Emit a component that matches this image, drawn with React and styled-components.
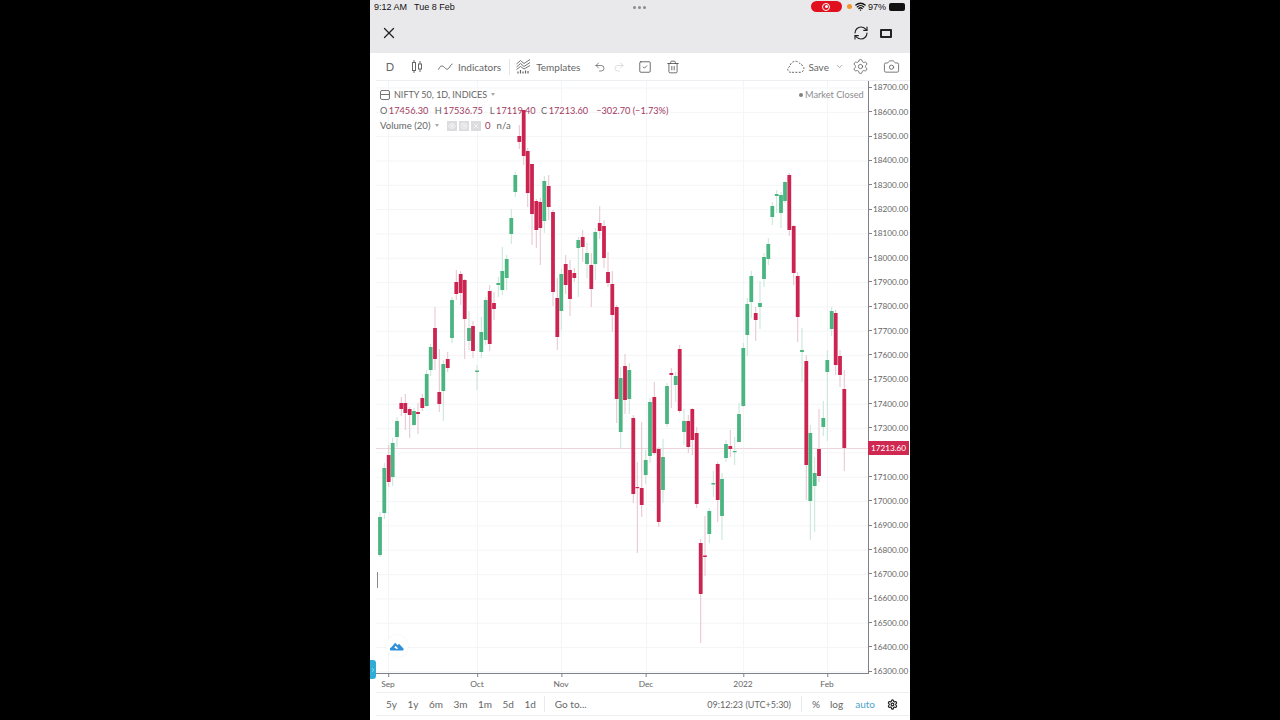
import React from 'react';
import styled, { createGlobalStyle } from 'styled-components';
import { X, RefreshCw, Undo2, Redo2, SquareCheck, Trash2, ChevronDown, Settings, Camera, Wifi, ChevronRight, Eye } from 'lucide-react';

const GlobalStyle = createGlobalStyle`
  html, body {
    margin: 0;
    height: 100%;
    background: #000;
  }
  * { box-sizing: border-box; }
`;

const FONT = 'Lato, "Open Sans", sans-serif';
const UP = '#4bb582';
const DOWN = '#cb2450';
const UP_WICK = '#c5e6d5';
const DOWN_WICK = '#e6c3ce';
const GRID = '#f4f5f7';

// x, colour, wick top, body top, body bottom, wick bottom (read off the picture)
const candles = [
  [380, 'g', 512, 517, 555, 557], [384.3, 'g', 463, 468, 513, 519], [388.7, 'r', 445, 455, 482, 487],
  [392.7, 'g', 438, 443, 477, 486], [397, 'g', 417, 421, 437, 447], [401.3, 'r', 397, 403, 409, 416],
  [405.3, 'r', 394, 403, 413, 430], [409.7, 'r', 407, 409, 415, 438], [414, 'g', 408, 411, 425, 426],
  [418, 'r', 403, 412, 414, 434], [422.3, 'r', 394, 398, 408, 411], [426.7, 'g', 370, 374, 406, 407],
  [430.7, 'g', 344, 347, 370, 376], [435, 'r', 307, 328, 359, 370], [439.3, 'r', 349, 392, 404, 412],
  [443.3, 'g', 360, 364, 391, 421], [447.7, 'r', 352, 359, 368, 372], [452, 'g', 297, 300, 338, 343],
  [456.3, 'r', 270, 282, 294, 300], [460.7, 'r', 271, 274, 293, 305], [464.7, 'r', 279, 280, 319, 359],
  [469, 'g', 311, 328, 341, 350], [473, 'r', 321, 326, 351, 358], [477, 'g', 365, 370.5, 372, 390],
  [481.3, 'g', 317, 332, 352, 358], [485.7, 'g', 297, 300, 340, 345], [489.7, 'r', 285, 291, 344, 351],
  [494, 'r', 292, 303, 309, 320], [498.3, 'g', 277, 283, 285, 297], [502.3, 'g', 247, 271, 290, 295],
  [506.7, 'g', 255, 259, 278, 290], [511.3, 'g', 209, 218, 234, 244], [515.3, 'g', 172, 175, 192, 197],
  [519.3, 'r', 125, 136, 142, 149], [523.7, 'r', 110, 110, 156, 165], [527.7, 'r', 148, 151, 193, 207],
  [532, 'r', 164, 164, 214, 245], [536.3, 'r', 199, 201, 230, 248], [540.3, 'r', 198, 202, 228, 265],
  [544.3, 'g', 176, 181, 221, 233], [548.7, 'r', 175, 186, 207, 220], [553, 'r', 210, 212, 292, 306],
  [557.3, 'r', 278, 298, 337, 350], [561.3, 'g', 269, 274, 311, 330], [565.7, 'r', 255, 264, 285, 294],
  [570, 'r', 260, 270, 299, 316], [574.3, 'r', 268, 273, 278, 282], [578.3, 'g', 237, 240, 248, 297],
  [582.7, 'r', 230, 237, 247, 262], [587, 'g', 243, 253, 264, 278], [591.3, 'r', 253, 265, 289, 307],
  [595.3, 'g', 228, 232, 264, 280], [599.7, 'r', 206, 223, 231, 239], [604, 'r', 220, 226, 258, 268],
  [608, 'r', 252, 272, 283, 287], [612.3, 'r', 271, 284, 315, 332], [616.7, 'r', 305, 307, 399, 423],
  [620.7, 'g', 367, 378, 432, 448], [625, 'r', 354, 366, 400, 414], [629.3, 'g', 363, 370, 399, 414],
  [633.3, 'r', 415, 418, 494, 503], [637.3, 'r', 462, 487, 488, 553], [641.7, 'r', 422, 488, 505, 517],
  [645.7, 'g', 450, 460, 475, 484], [650, 'g', 398, 402, 456, 463], [654.3, 'r', 382, 397, 453, 455],
  [658.7, 'r', 447, 449, 522, 527], [663, 'g', 439, 457, 490, 503], [667, 'g', 383, 386, 424, 427],
  [671.3, 'r', 368, 373, 375, 408], [675.7, 'g', 372, 376, 385, 402], [679.7, 'r', 345, 349, 411, 413],
  [684, 'g', 409, 421, 432, 445], [688.3, 'r', 415, 421, 447, 453], [692.3, 'r', 408, 409, 440, 455],
  [696.7, 'r', 427, 433, 504, 508], [700.7, 'r', 539, 543, 594, 643], [705, 'r', 516, 555.5, 557, 576],
  [709.3, 'g', 508, 511, 534, 543], [713.3, 'g', 471, 483, 484.5, 497], [717.7, 'r', 462, 464, 500, 522],
  [722, 'g', 473, 479, 516, 540], [726, 'g', 440, 444, 458, 462], [730.3, 'r', 430, 446, 449, 457],
  [734.7, 'g', 437, 451, 452, 465], [739, 'g', 403, 414, 442, 442], [743.3, 'g', 343, 348, 406, 407],
  [747.3, 'g', 298, 304, 335, 356], [751.3, 'g', 271, 276, 302, 318], [755.7, 'r', 307, 313, 320, 341],
  [760, 'g', 281, 303, 307, 329], [764, 'g', 253, 257, 279, 287], [768.3, 'g', 238, 244, 259, 265],
  [772.3, 'g', 202, 206, 217, 225], [776.7, 'g', 190, 194, 196, 213], [781, 'g', 192, 195, 213, 228],
  [785, 'g', 181, 182, 201, 203], [789.3, 'r', 173, 175, 230, 236], [793.7, 'r', 225, 226, 273, 285],
  [797.7, 'r', 272, 276, 317, 342], [802, 'g', 328, 350, 352, 382], [806.3, 'r', 355, 361, 465, 500],
  [810.3, 'g', 425, 433, 501, 540], [814.7, 'g', 457, 473, 486, 532], [819, 'r', 409, 449, 476, 482],
  [823.3, 'g', 401, 418, 427, 436], [827.3, 'g', 350, 360, 372, 441], [831.7, 'g', 307, 311, 329, 336],
  [835.7, 'r', 310, 313, 365, 375], [840, 'r', 350, 356, 375, 387], [844.3, 'r', 370, 389, 448, 471],
];

const prices = Array.from({ length: 25 }, (_, i) => 18700 - i * 100);
const timeMarks = [
  { label: 'Sep', x: 388 }, { label: 'Oct', x: 477 }, { label: 'Nov', x: 561 },
  { label: 'Dec', x: 646 }, { label: '2022', x: 743 }, { label: 'Feb', x: 827 },
];
const ranges = ['5y', '1y', '6m', '3m', '1m', '5d', '1d'];

const Page = styled.div`
  width: 100%;
  height: 100vh;
  display: flex;
  justify-content: center;
  background: #000;
  overflow: hidden;
`;
const Phone = styled.div`
  width: 540px;
  height: 720px;
  display: flex;
  flex-direction: column;
  background: #fff;
  font-family: ${FONT};
  color: #555;
`;
const TopBar = styled.div`
  height: 53px;
  flex: none;
  background: #e9e9eb;
  display: flex;
  flex-direction: column;
`;
const StatusRow = styled.div`
  height: 13px;
  padding: 0 5px 0 4px;
  display: flex;
  align-items: center;
  font-family: "Liberation Sans", sans-serif;
  font-size: 9px;
  color: #111;
  position: relative;
`;
const StatusDate = styled.span`
  margin-left: 7px;
`;
const Dots = styled.div`
  position: absolute;
  left: 263px;
  top: 6px;
  display: flex;
  gap: 2px;
`;
const Dot = styled.i`
  width: 3px;
  height: 3px;
  border-radius: 50%;
  background: #8b8b8f;
`;
const StatusRight = styled.div`
  margin-left: auto;
  display: flex;
  align-items: center;
`;
const RecordPill = styled.div`
  width: 31px;
  height: 11px;
  border-radius: 6px;
  background: #e0101f;
  display: flex;
  align-items: center;
  justify-content: center;
  margin-right: 5px;
`;
const RecordMark = styled.i`
  width: 8px;
  height: 8px;
  border-radius: 50%;
  border: 1px solid #fff;
  display: flex;
  align-items: center;
  justify-content: center;
  &::after {
    content: '';
    width: 3px;
    height: 3px;
    border-radius: 50%;
    background: #fff;
  }
`;
const OrangeDot = styled.i`
  width: 5px;
  height: 5px;
  border-radius: 50%;
  background: #f0962a;
  margin-right: 3px;
`;
const Percent = styled.span`
  margin: 0 3px 0 2px;
`;
const Battery = styled.i`
  width: 16px;
  height: 8px;
  border-radius: 2px;
  background: #111;
  display: block;
`;
const AppRow = styled.div`
  flex: 1;
  display: flex;
  align-items: center;
  padding: 0 18px 0 10px;
  color: #222;
`;
const AppRight = styled.div`
  margin-left: auto;
  display: flex;
  align-items: center;
  gap: 11px;
`;
const Landscape = styled.i`
  width: 12px;
  height: 9px;
  border: 2px solid #222;
  border-radius: 1px;
  display: block;
`;
const Toolbar = styled.div`
  height: 28px;
  flex: none;
  margin-left: 6px;
  display: flex;
  align-items: center;
  border-bottom: 1px solid #eeeff2;
  font-size: 10px;
  color: #666;
`;
const ToolGroup = styled.div`
  display: flex;
  align-items: center;
  gap: ${p => p.$gap || 0}px;
  margin-left: ${p => p.$left || 0}px;
  height: 100%;
`;
const Interval = styled.span`
  width: 28px;
  text-align: center;
  font-size: 11px;
`;
const ToolDivider = styled.i`
  width: 1px;
  height: 16px;
  background: #e4e5e9;
  display: block;
  margin-left: ${p => p.$left || 0}px;
`;
const ChartRow = styled.div`
  position: relative;
  height: 593px;
  flex: none;
  display: flex;
`;
const ChartSvg = styled.svg`
  width: 498px;
  height: 593px;
  display: block;
  flex: none;
`;
const PriceScale = styled.div`
  width: 42px;
  height: 593px;
  border-left: 1px solid #7f828c;
`;
const PriceList = styled.div`
  margin-top: -5.8px;
`;
const PriceRow = styled.div`
  height: 24.33px;
  display: flex;
  align-items: center;
  font-size: 8.2px;
  color: #666;
  &::before {
    content: '';
    width: 3px;
    height: 1px;
    background: #7f828c;
    margin-right: 1px;
  }
`;
const PriceTag = styled.div`
  position: absolute;
  left: 498px;
  top: 360px;
  width: 41px;
  height: 14px;
  background: #cf2952;
  color: #fff;
  font-size: 8.2px;
  display: flex;
  align-items: center;
  justify-content: center;
`;
const Legend = styled.div`
  position: absolute;
  left: 10px;
  top: 6px;
  display: flex;
  flex-direction: column;
`;
const LegendRow = styled.div`
  height: 15.5px;
  display: flex;
  align-items: center;
  font-size: ${p => p.$size || 9.2}px;
  white-space: nowrap;
  color: #666;
`;
const SymbolBox = styled.i`
  width: 10px;
  height: 10px;
  border: 1px solid #777;
  border-radius: 2px;
  margin-right: 4px;
  display: flex;
  align-items: center;
  &::after {
    content: '';
    width: 100%;
    height: 1px;
    background: #777;
  }
`;
const Caret = styled.i`
  width: 0;
  height: 0;
  border-left: 2.5px solid transparent;
  border-right: 2.5px solid transparent;
  border-top: 3px solid #aaa;
  margin-left: ${p => p.$left || 4}px;
`;
const Ohlc = styled.span`
  margin-left: ${p => p.$left || 0}px;
`;
const OhlcValue = styled.span`
  color: #a33a60;
  margin-left: ${p => p.$left || 1.5}px;
`;
const VolumeButtons = styled.div`
  display: flex;
  gap: 2px;
  margin: 0 3px 0 8px;
`;
const VolumeButton = styled.i`
  width: 10px;
  height: 10px;
  background: #dcdcdf;
  display: flex;
  align-items: center;
  justify-content: center;
  color: #fff;
`;
const MarketStatus = styled.div`
  position: absolute;
  left: 429px;
  top: 6px;
  height: 15px;
  display: flex;
  align-items: center;
  gap: 2px;
  font-size: 9.2px;
  color: #8c8c90;
  &::before {
    content: '';
    width: 4px;
    height: 4px;
    border-radius: 50%;
    background: #808085;
  }
`;
const LogoBadge = styled.div`
  position: absolute;
  left: 16px;
  top: 554px;
  width: 22px;
  height: 22px;
  border-radius: 50%;
  background: #fff;
  box-shadow: 0 0 2px rgba(0, 0, 0, 0.08);
  display: flex;
  align-items: center;
  justify-content: center;
`;
const SideTab = styled.div`
  position: absolute;
  left: 0;
  top: 579px;
  width: 6px;
  height: 19px;
  border-radius: 0 3px 3px 0;
  background: #2eaed6;
  color: #fff;
  display: flex;
  align-items: center;
  justify-content: center;
`;
const TimeScale = styled.div`
  position: relative;
  height: 19px;
  flex: none;
  margin-left: 6px;
  border-bottom: 1px solid #eeeff2;
`;
const TimeLabel = styled.span`
  position: absolute;
  top: 5px;
  transform: translateX(-50%);
  font-size: 8.4px;
  color: #666;
  &::before {
    content: '';
    position: absolute;
    left: 50%;
    top: -5px;
    width: 1px;
    height: 3px;
    background: #7f828c;
  }
`;
const BottomBar = styled.div`
  height: 23px;
  flex: none;
  margin-left: 6px;
  display: flex;
  align-items: center;
  border-bottom: 1px solid #eeeff2;
  font-size: 10px;
  color: #666;
  padding-left: 10px;
`;
const Ranges = styled.div`
  display: flex;
  gap: 10.5px;
`;
const BarDivider = styled.i`
  width: 1px;
  height: 16px;
  background: #e9eaed;
  display: block;
  margin: 0 ${p => p.$right || 10}px 0 ${p => p.$left || 10}px;
`;
const BarRight = styled.div`
  margin-left: auto;
  display: flex;
  align-items: center;
  padding-right: 12px;
`;
const ClockText = styled.span`
  font-size: 9px;
`;
const ScaleButton = styled.span`
  margin-right: ${p => p.$right || 0}px;
  color: ${p => (p.$active ? '#4aa3c9' : '#666')};
`;

function Candles() {
  return candles.map(([x, c, wt, bt, bb, wb]) => (
    <g key={x}>
      <rect x={x - 0.5} y={wt} width="1" height={wb - wt} fill={c === 'g' ? UP_WICK : DOWN_WICK} />
      <rect x={x - 1.9} y={bt} width="3.8" height={Math.max(bb - bt, 1.2)} fill={c === 'g' ? UP : DOWN} />
    </g>
  ));
}

function Chart() {
  return (
    <ChartSvg viewBox="370 81 498 593">
      {prices.map((p, i) => (
        <rect key={p} x="376" y={87.5 + i * 24.33} width="492" height="1" fill={GRID} />
      ))}
      {timeMarks.map(m => (
        <rect key={m.label} x={m.x} y="81" width="1" height="593" fill={GRID} />
      ))}
      <rect x="376" y="448" width="492" height="1" fill="#ecd6dc" />
      <rect x="377" y="572" width="1" height="16" fill="#8a8a8a" />
      <Candles />
      <rect x="376" y="673" width="492" height="1" fill="#7f828c" />
    </ChartSvg>
  );
}

function CandleIcon() {
  return (
    <svg width="12" height="13" viewBox="0 0 12 13" fill="none" stroke="#666" strokeWidth="1">
      <path d="M3 0v13M9 1v11" />
      <rect x="1.5" y="2.5" width="3" height="8" fill="#fff" />
      <rect x="7.5" y="4" width="3" height="5" fill="#fff" />
    </svg>
  );
}

function WaveIcon() {
  return (
    <svg width="15" height="8" viewBox="0 0 15 8" fill="none" stroke="#666" strokeWidth="1">
      <path d="M0.5 6.5C2 3 4 2 6 4s3 3 4.5 1.5S13 1 14.5 1" />
    </svg>
  );
}

function TemplatesIcon() {
  return (
    <svg width="15" height="15" viewBox="0 0 15 15" fill="none" stroke="#666" strokeWidth="0.9">
      <path d="M0.5 5L4.5 1.5L8 4.5L14 0.5M0.5 8L4.5 4.5L8 7.5L14 3.5M0.5 10.5L4.5 7.5L8 10L14 6.5" />
      <path d="M2 14.5v-2M4.5 14.5v-3.5M7 14.5v-2M9.5 14.5v-3M12 14.5v-2.5" strokeWidth="1.2" />
    </svg>
  );
}

function DashedCloud() {
  return (
    <svg width="18" height="13" viewBox="0 0 18 13" fill="none" stroke="#555" strokeWidth="0.9" strokeDasharray="2 1.4">
      <path d="M4 12.3H3.5A3 3 0 0 1 3 6.4A5.5 5.5 0 0 1 13.5 4.5A4 4 0 0 1 14 12.3Z" />
    </svg>
  );
}

function CloudLogo() {
  return (
    <svg width="14" height="9" viewBox="0 0 14 9" fill="#2f8fd8">
      <path d="M1.6 8.6A1.6 1.6 0 0 1 1.2 5.4L5.2 0.8L7.6 3.2L9 1.8L13.2 6.2A1.4 1.4 0 0 1 12.4 8.6Z" />
      <path d="M4.2 5.4L5.6 3.8L8.2 6.4L6.8 7Z" fill="#fff" />
    </svg>
  );
}

export default function App() {
  return (
    <Page>
      <GlobalStyle />
      <Phone>
        <TopBar>
          <StatusRow>
            <span>9:12 AM</span>
            <StatusDate>Tue 8 Feb</StatusDate>
            <Dots><Dot /><Dot /><Dot /></Dots>
            <StatusRight>
              <RecordPill><RecordMark /></RecordPill>
              <OrangeDot />
              <Wifi size={11} strokeWidth={3} color="#111" />
              <Percent>97%</Percent>
              <Battery />
            </StatusRight>
          </StatusRow>
          <AppRow>
            <X size={18} strokeWidth={1.7} />
            <AppRight>
              <RefreshCw size={16} strokeWidth={1.7} />
              <Landscape />
            </AppRight>
          </AppRow>
        </TopBar>
        <Toolbar>
          <Interval>D</Interval>
          <ToolGroup $left={7}><CandleIcon /></ToolGroup>
          <ToolGroup $left={15} $gap={5}><WaveIcon /><span>Indicators</span></ToolGroup>
          <ToolDivider $left={8} />
          <ToolGroup $left={6} $gap={5}><TemplatesIcon /><span>Templates</span></ToolGroup>
          <ToolGroup $left={14} $gap={7}>
            <Undo2 size={12} strokeWidth={1.4} color="#555" />
            <Redo2 size={12} strokeWidth={1.3} color="#ccc" />
          </ToolGroup>
          <ToolGroup $left={13}><SquareCheck size={14} strokeWidth={1.3} color="#444" /></ToolGroup>
          <ToolGroup $left={14}><Trash2 size={14} strokeWidth={1.3} color="#444" /></ToolGroup>
          <ToolGroup $left={107} $gap={3}><DashedCloud /><span>Save</span></ToolGroup>
          <ToolGroup $left={6}><ChevronDown size={9} strokeWidth={1.4} color="#666" /></ToolGroup>
          <ToolGroup $left={8}><Settings size={17} strokeWidth={1.1} color="#555" /></ToolGroup>
          <ToolGroup $left={14}><Camera size={17} strokeWidth={1.1} color="#555" /></ToolGroup>
        </Toolbar>
        <ChartRow>
          <Chart />
          <PriceScale>
            <PriceList>
              {prices.map(p => <PriceRow key={p}>{p}.00</PriceRow>)}
            </PriceList>
          </PriceScale>
          <PriceTag>17213.60</PriceTag>
          <Legend>
            <LegendRow $size={9}>
              <SymbolBox />
              <span>NIFTY 50, 1D, INDICES</span>
              <Caret />
            </LegendRow>
            <LegendRow>
              <Ohlc>O</Ohlc><OhlcValue>17456.30</OhlcValue>
              <Ohlc $left={6.5}>H</Ohlc><OhlcValue>17536.75</OhlcValue>
              <Ohlc $left={7}>L</Ohlc><OhlcValue>17119.40</OhlcValue>
              <Ohlc $left={5.5}>C</Ohlc><OhlcValue>17213.60</OhlcValue>
              <OhlcValue $left={8}>−302.70 (−1.73%)</OhlcValue>
            </LegendRow>
            <LegendRow $size={9.6}>
              <span>Volume (20)</span>
              <Caret />
              <VolumeButtons>
                <VolumeButton><Eye size={8} strokeWidth={2} /></VolumeButton>
                <VolumeButton><Settings size={8} strokeWidth={2} /></VolumeButton>
                <VolumeButton><X size={8} strokeWidth={2} /></VolumeButton>
              </VolumeButtons>
              <OhlcValue>0</OhlcValue>
              <Ohlc $left={6}>n/a</Ohlc>
            </LegendRow>
          </Legend>
          <MarketStatus>Market Closed</MarketStatus>
          <LogoBadge><CloudLogo /></LogoBadge>
          <SideTab><ChevronRight size={6} strokeWidth={2} /></SideTab>
        </ChartRow>
        <TimeScale>
          {timeMarks.map(m => (
            <TimeLabel key={m.label} style={{ left: m.x - 376 }}>{m.label}</TimeLabel>
          ))}
        </TimeScale>
        <BottomBar>
          <Ranges>{ranges.map(r => <span key={r}>{r}</span>)}</Ranges>
          <BarDivider $left={8} $right={10} />
          <span>Go to...</span>
          <BarRight>
            <ClockText>09:12:23 (UTC+5:30)</ClockText>
            <BarDivider $left={10} $right={10} />
            <ScaleButton $right={10}>%</ScaleButton>
            <ScaleButton $right={12}>log</ScaleButton>
            <ScaleButton $active $right={12}>auto</ScaleButton>
            <Settings size={11} strokeWidth={2.6} color="#222" />
          </BarRight>
        </BottomBar>
      </Phone>
    </Page>
  );
}
